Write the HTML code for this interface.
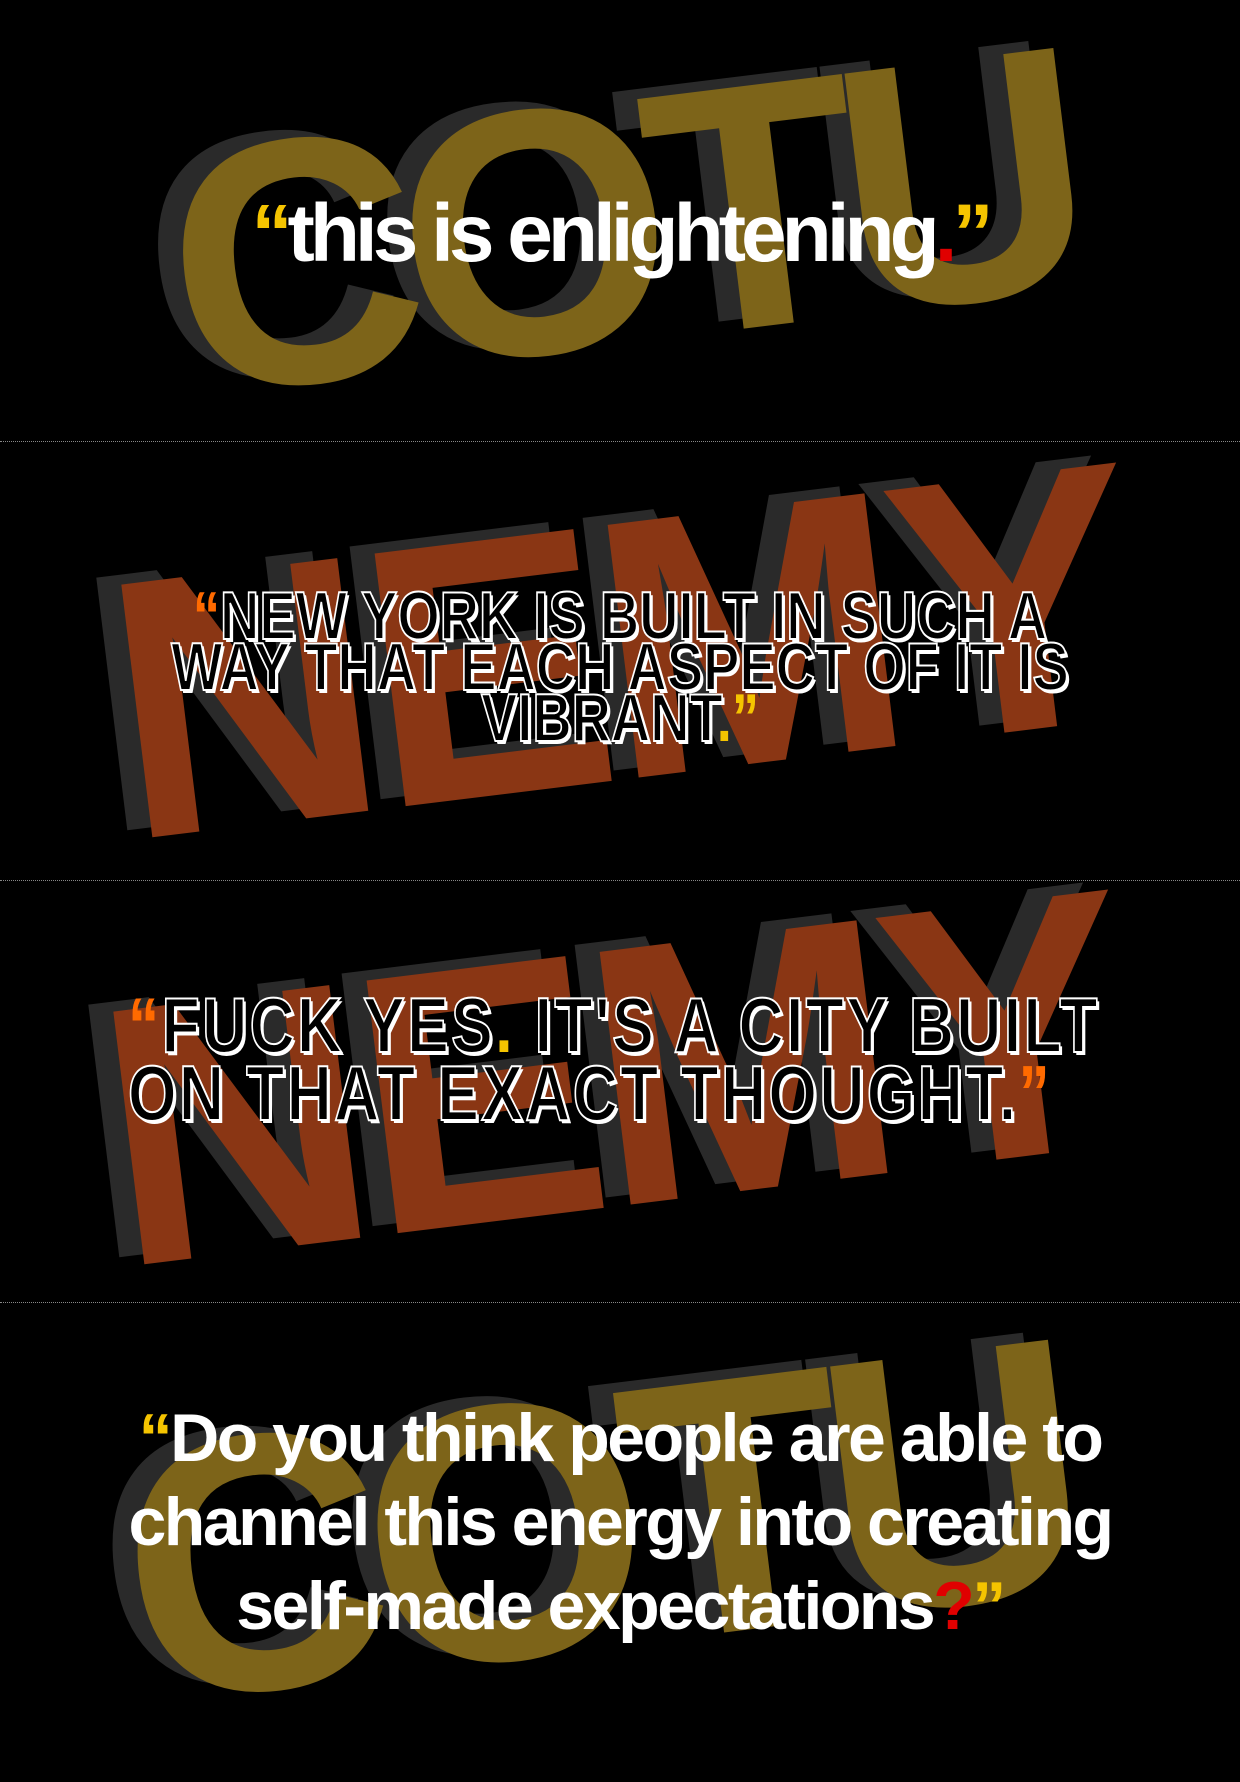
<!DOCTYPE html>
<html><head><meta charset="utf-8"><style>
html,body{margin:0;padding:0;background:#000;}
body{width:1240px;height:1748px;position:relative;overflow:hidden;font-family:"Liberation Sans",sans-serif;}
.big{position:absolute;width:0;height:0;}
.big span{position:absolute;left:0;top:0;transform:translate(-50%,-50%) rotate(-7deg);font-weight:bold;line-height:1;white-space:nowrap;}
.cotu span{color:#7d6419;text-shadow:-24px -10px 0 #2a2a2a;letter-spacing:-22px;}
.nemy span{color:#8a3614;text-shadow:-24px -10px 0 #2a2a2a;letter-spacing:-12px;}
.sep{position:absolute;left:0;width:1240px;height:0;border-top:1px dotted #888;}
.q{position:absolute;left:0;width:1240px;text-align:center;color:#fff;font-weight:bold;white-space:nowrap;}
.o{position:absolute;color:#000;font-family:"Liberation Sans",sans-serif;font-weight:bold;text-transform:uppercase;-webkit-text-stroke:2px #fff;text-shadow:3px 3px 0 #fff;white-space:nowrap;}
.y{color:#f5c400;-webkit-text-stroke:0;text-shadow:none;}
.r{color:#e00000;-webkit-text-stroke:0;text-shadow:none;}
.or{color:#ff6a00;-webkit-text-stroke:0;text-shadow:none;}
</style></head><body>

<div class="big cotu" style="left:619px;top:223px;"><span style="font-size:350px;">COTU</span></div>
<div class="q" style="top:193px;font-size:82px;line-height:1;letter-spacing:-5px;"><span class="y">“</span>this is enlightening<span class="r">.</span><span class="y">”</span></div>
<div class="sep" style="top:441px;"></div>

<div class="big nemy" style="left:619px;top:652px;"><span style="font-size:370px;">NEMY</span></div>
<div class="o" style="left:0;width:1240px;text-align:center;top:591px;font-size:68px;line-height:51px;transform:scaleX(0.8);transform-origin:620px 0;"><span class="or">“</span>New York is built in such a<br>way that each aspect of it is<br>vibrant<span class="y">.</span><span class="y">”</span></div>
<div class="sep" style="top:880px;"></div>

<div class="big nemy" style="left:611px;top:1079px;"><span style="font-size:370px;">NEMY</span></div>
<div class="o" style="left:128px;top:991px;font-size:78px;line-height:68px;letter-spacing:3px;transform:scaleX(0.8);transform-origin:0 0;"><span class="or">“</span>Fuck yes<span class="y">.</span> It's a city built<br>on that exact thought.<span class="or">”</span></div>
<div class="sep" style="top:1302px;"></div>

<div class="big cotu" style="left:594px;top:1522px;"><span style="font-size:365px;">COTU</span></div>
<div class="q" style="top:1396px;font-size:68px;line-height:84px;letter-spacing:-2.5px;"><span class="y">“</span>Do you think people are able to<br>channel this energy into creating<br>self-made expectations<span class="r">?</span><span class="y">”</span></div>

</body></html>
